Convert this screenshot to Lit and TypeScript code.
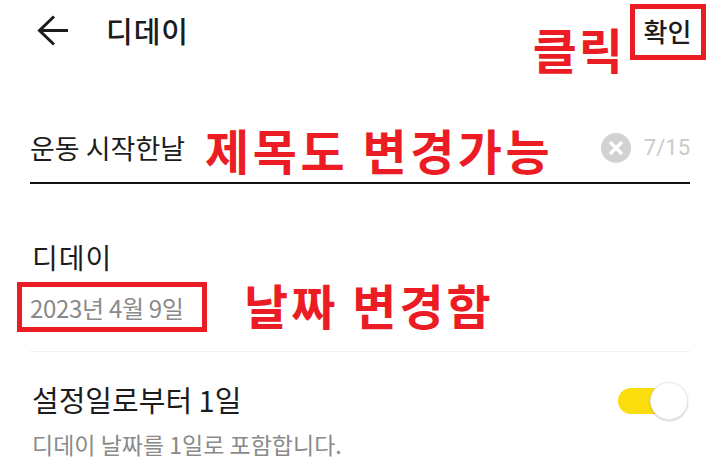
import { LitElement, html, css } from "lit";
import { customElement } from "lit/decorators.js";

@customElement("app-root")
export class AppRoot extends LitElement {
  static styles = css`
    :host {
      display: block;
      width: 720px;
      height: 470px;
      overflow: hidden;
      background: #fff;
      font-family: "Noto Sans CJK KR", "Noto Sans", sans-serif;
      color: #1c1c1c;
    }
    .header {
      display: flex;
      align-items: flex-start;
      height: 84px;
      padding: 4px 14px 0 37px;
      box-sizing: border-box;
    }
    .back {
      width: 32px;
      height: 31px;
      margin-top: 11px;
      flex: none;
    }
    .title {
      margin: 5px 0 0 37px;
      font-size: 29px;
      line-height: 42px;
      letter-spacing: 1px;
      font-weight: 500;
    }
    .click {
      margin: 14px 5px 0 auto;
      font-size: 48px;
      line-height: 60px;
      font-weight: 700;
      color: #ec1c24;
      letter-spacing: 2px;
    }
    .confirm {
      box-sizing: border-box;
      width: 76px;
      height: 56px;
      border: 5px solid #ec1c24;
      display: flex;
      align-items: center;
      justify-content: center;
      font-size: 26px;
      font-weight: 500;
      padding: 0 1px 4px 0;
    }
    .field {
      display: flex;
      align-items: center;
      height: 100px;
      margin: 0 30px;
      box-sizing: border-box;
      border-bottom: 2px solid #111;
      padding-top: 28px;
    }
    .field-text {
      font-size: 27px;
      line-height: 36px;
      margin-top: 2px;
      white-space: nowrap;
    }
    .note-a {
      margin: 3px 0 0 20px;
      font-size: 48px;
      line-height: 54px;
      font-weight: 700;
      color: #ec1c24;
      letter-spacing: 3.5px;
      white-space: nowrap;
    }
    .clear {
      margin: 2px 0 0 auto;
      width: 30px;
      height: 30px;
      flex: none;
    }
    .count {
      margin: 2px 0 0 13px;
      font-size: 22px;
      line-height: 30px;
      color: #c9c9c9;
      font-family: "Roboto", "Noto Sans CJK KR", sans-serif;
    }
    .section {
      margin: 0 30px;
      padding-top: 53px;
      height: 168px;
      box-sizing: border-box;
      border-bottom: 1px solid #f1f1f1;
    }
    .section-title {
      margin-left: 2px;
      font-size: 28px;
      line-height: 40px;
      letter-spacing: 1px;
    }
    .date-row {
      display: flex;
      align-items: center;
      margin: 5px 0 0 -13px;
    }
    .date {
      box-sizing: border-box;
      width: 190px;
      height: 50px;
      border: 5px solid #ec1c24;
      padding-left: 8px;
      display: flex;
      align-items: center;
      font-size: 24px;
      color: #8a8a8a;
      letter-spacing: -0.3px;
      white-space: nowrap;
    }
    .note-b {
      margin: 0 0 6px 37px;
      font-size: 48px;
      line-height: 44px;
      font-weight: 700;
      color: #ec1c24;
      letter-spacing: 3px;
      white-space: nowrap;
    }
    .option {
      display: grid;
      grid-template-columns: 1fr auto;
      align-items: start;
      margin: 0 30px;
      padding: 27px 0 0 2px;
    }
    .opt-title {
      font-size: 29px;
      line-height: 40px;
    }
    .toggle {
      position: relative;
      width: 70px;
      height: 38px;
      margin: 3px 2px 0 0;
      display: flex;
      align-items: center;
    }
    .track {
      width: 50px;
      height: 26px;
      border-radius: 13px;
      background: #fbdc0c;
    }
    .knob {
      position: absolute;
      right: 0;
      top: 0;
      width: 38px;
      height: 38px;
      box-sizing: border-box;
      border-radius: 50%;
      background: #fff;
      border: 1px solid #e8e8e8;
      box-shadow: 0 1px 2px rgba(0, 0, 0, 0.2);
    }
    .desc {
      grid-column: 1 / -1;
      margin-top: 9px;
      font-size: 23px;
      line-height: 30px;
      color: #8a8a8a;
      white-space: nowrap;
    }
  `;

  render() {
    return html`
      <div class="header">
        <svg class="back" viewBox="0 0 32 31" fill="none" stroke="#1c1c1c" stroke-width="3">
          <path d="M31 15.5H3M17 1.5L2.5 15.5L17 29.5" />
        </svg>
        <div class="title">디데이</div>
        <div class="click">클릭</div>
        <div class="confirm">확인</div>
      </div>
      <div class="field">
        <div class="field-text">운동 시작한날</div>
        <div class="note-a">제목도 변경가능</div>
        <svg class="clear" viewBox="0 0 30 30">
          <circle cx="15" cy="15" r="15" fill="#d2d2d2" />
          <path d="M10 10L20 20M20 10L10 20" stroke="#fff" stroke-width="3.4" stroke-linecap="round" />
        </svg>
        <div class="count">7/15</div>
      </div>
      <div class="section">
        <div class="section-title">디데이</div>
        <div class="date-row">
          <div class="date">2023년 4월 9일</div>
          <div class="note-b">날짜 변경함</div>
        </div>
      </div>
      <div class="option">
        <div class="opt-title">설정일로부터 1일</div>
        <div class="toggle"><div class="track"></div><div class="knob"></div></div>
        <div class="desc">디데이 날짜를 1일로 포함합니다.</div>
      </div>
    `;
  }
}
